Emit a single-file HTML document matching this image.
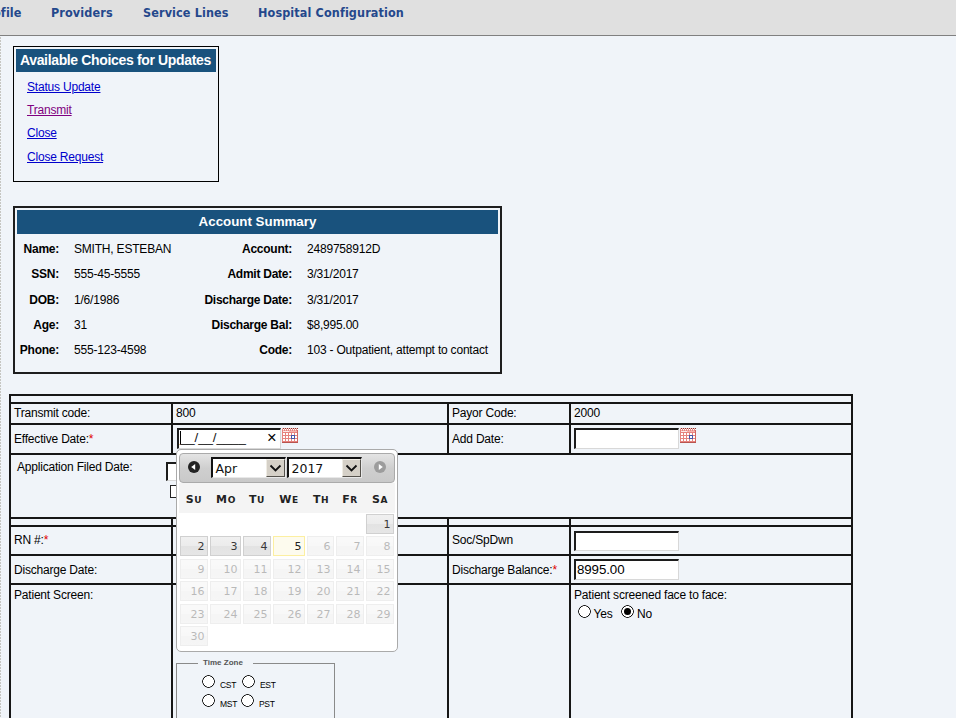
<!DOCTYPE html>
<html lang="en">
<head>
<meta charset="utf-8">
<title>Account Update</title>
<style>
html,body{margin:0;padding:0;}
body{width:956px;height:718px;overflow:hidden;position:relative;background:#f0f4f9;font-family:"Liberation Sans",Arial,sans-serif;font-size:12px;color:#000;letter-spacing:-0.2px;}
.abs{position:absolute;}
#leftdots{left:0;top:37px;width:1px;height:700px;background:repeating-linear-gradient(to bottom,#c6c6c2 0,#c6c6c2 2px,transparent 2px,transparent 3px);}
#nav{left:0;top:0;width:956px;height:35px;background:#e0e0e0;border-bottom:1px solid #808080;}
#nav a{position:absolute;top:5px;font-family:"DejaVu Sans Condensed","DejaVu Sans",Verdana,sans-serif;font-weight:bold;font-size:12.5px;line-height:16px;color:#24488c;text-decoration:none;white-space:nowrap;letter-spacing:0.12px;}
#choices{left:13px;top:46px;width:204px;height:134px;border:1px solid #000;}
#choices h3{position:absolute;left:2px;top:2px;width:196px;height:23px;margin:0;padding-left:4px;background:#19527d;color:#fff;font-size:14px;line-height:22px;font-weight:bold;text-align:left;white-space:nowrap;letter-spacing:-0.35px;}
#choices a{position:absolute;left:13px;font-size:12px;line-height:14px;color:#0000cc;text-decoration:underline;white-space:nowrap;}
#choices a.v{color:#800080;}
#summary{left:13px;top:206px;width:485px;height:164px;border:2px solid #1e1e1e;}
#summary h3{position:absolute;left:2px;top:2px;width:481px;height:24px;margin:0;background:#19527d;color:#fff;font-size:13.33px;line-height:24px;font-weight:bold;text-align:center;letter-spacing:0;}
#summary .l{position:absolute;font-weight:bold;letter-spacing:-0.25px;text-align:right;white-space:nowrap;line-height:14px;}
#summary .v{position:absolute;white-space:nowrap;line-height:14px;}
#form{left:9px;top:394px;border-collapse:collapse;table-layout:fixed;width:842px;}
#form td{border:2px solid #161616;padding:0 0 0 3px;vertical-align:top;font-size:12px;line-height:14px;white-space:nowrap;overflow:visible;}
.req{color:#e00000;}
.inp{display:inline-block;box-sizing:border-box;background:#fff;border-style:solid;border-width:2px 1px 1px 2px;border-color:#1c1c1c #d8d8d8 #d8d8d8 #1c1c1c;height:21px;font-size:13.33px;line-height:17px;padding:0 0 0 1px;letter-spacing:-0.1px;vertical-align:top;}

.caret{position:absolute;left:1px;top:1px;width:1px;height:13px;background:#000;}
.mask{position:relative;top:-1px;font-size:13.33px;letter-spacing:-0.1px;color:#111;}
.clr{position:absolute;right:3.5px;top:-1px;font-size:16.5px;line-height:17px;color:#000;}
.cal{vertical-align:top;margin-left:1px;}
.chk{width:11px;height:11px;border:1px solid #222;background:#fff;}
.rad{width:13px;height:13px;border-radius:50%;background:radial-gradient(circle closest-side,#fff 0,#fff 5.1px,#111 5.6px,#111 6.2px,rgba(17,17,17,0) 6.5px);}
.rad.on::after{content:"";position:absolute;left:3px;top:3px;width:7px;height:7px;border-radius:50%;background:#000;}
#tz{position:absolute;left:3px;top:74px;width:159px;height:70px;margin:0;padding:0;border:1px solid #8a8a8a;box-sizing:border-box;}
#tz legend{margin-left:21px;padding:0 10px 0 5px;font-size:8px;font-weight:bold;color:#555;line-height:9px;letter-spacing:0;position:relative;top:-1.5px;}
#tz label{font-size:8.5px;line-height:9px;color:#000;letter-spacing:-0.3px;margin-top:-1px;}

#dp{left:176px;top:449px;width:220px;height:201px;border:1px solid #aaa;border-radius:5px;background:#fff;font-family:"DejaVu Sans",Verdana,sans-serif;letter-spacing:0;}
#dph{position:absolute;left:2px;top:3px;width:214px;height:28px;border:1px solid #aaa;border-radius:4px;background:linear-gradient(#e4e4e4 0%,#cfcfcf 50%,#c9c9c9 100%);}
#dpw{position:absolute;left:2px;top:33px;width:216px;height:30px;background:#f4f4f4;}
.wd{position:absolute;top:10px;width:30px;text-align:center;font-weight:bold;font-size:11px;line-height:13px;color:#222;letter-spacing:0.6px;}
.wd .sc{font-size:9px;text-transform:uppercase;}
.ico{position:absolute;width:12px;height:12px;border-radius:50%;}
.ico svg{display:block;}
.sel{position:absolute;width:71.5px;height:18px;border-style:solid;border-width:2px 1px 1px 2px;border-color:#111 #e8e8e8 #e8e8e8 #111;background:#fff;}
.sel .st{position:absolute;left:2.5px;top:2px;font-size:12.5px;line-height:16px;color:#111;}
.sel .sb{position:absolute;right:0;top:0;width:17px;height:16px;border:1px solid;border-color:#efece4 #55524c #55524c #efece4;background:#d5d0c7;}
.sel .sb svg{display:block;}
.dc{position:absolute;height:20px;border:1px solid #d0d0d0;background:linear-gradient(#f0f0f0 0%,#ececec 48%,#e3e3e3 52%,#e6e6e6 100%);color:#383838;font-size:11px;line-height:20.5px;text-align:right;padding-right:2.5px;box-sizing:border-box;text-decoration:none;}
.dc.today{border-color:#fcefa1;background:#fdfbee;color:#222;}
.dc.dis{opacity:.35;}
</style>
</head>
<body>
<svg width="0" height="0" style="position:absolute">
  <defs>
    <g id="calico">
      <rect x="0" y="0.5" width="16" height="14.5" fill="#e6837e"/>
      <rect x="0" y="0" width="16" height="1" fill="#f3c1bd"/>
      <rect x="1" y="0" width="1" height="1" fill="#8b3532"/><rect x="1" y="1" width="1" height="1.4" fill="#fff"/><rect x="3" y="0" width="1" height="1" fill="#8b3532"/><rect x="3" y="1" width="1" height="1.4" fill="#fff"/><rect x="5" y="0" width="1" height="1" fill="#8b3532"/><rect x="5" y="1" width="1" height="1.4" fill="#fff"/><rect x="7" y="0" width="1" height="1" fill="#8b3532"/><rect x="7" y="1" width="1" height="1.4" fill="#fff"/><rect x="9" y="0" width="1" height="1" fill="#8b3532"/><rect x="9" y="1" width="1" height="1.4" fill="#fff"/><rect x="11" y="0" width="1" height="1" fill="#8b3532"/><rect x="11" y="1" width="1" height="1.4" fill="#fff"/><rect x="13" y="0" width="1" height="1" fill="#8b3532"/><rect x="13" y="1" width="1" height="1.4" fill="#fff"/><rect x="15" y="0" width="1" height="1" fill="#8b3532"/><rect x="15" y="1" width="1" height="1.4" fill="#fff"/>
      <rect x="1" y="3" width="14" height="1" fill="#f6b3ae"/>
      <rect x="1" y="3" width="6" height="1" fill="#fdeae8"/>
      <rect x="15" y="2" width="1" height="13" fill="#d2665f"/>
      <rect x="0" y="14" width="16" height="1" fill="#b9544f"/>
      <g fill="#fff"><rect x="1" y="5" width="2" height="2"/><rect x="4" y="5" width="2" height="2"/><rect x="7" y="5" width="2" height="2"/><rect x="10" y="5" width="2" height="2"/><rect x="13" y="5" width="2" height="2"/><rect x="1" y="8" width="2" height="2"/><rect x="4" y="8" width="2" height="2"/><rect x="7" y="8" width="2" height="2"/><rect x="10" y="8" width="2" height="2"/><rect x="13" y="8" width="2" height="2"/><rect x="1" y="11" width="2" height="2"/><rect x="4" y="11" width="2" height="2"/><rect x="7" y="11" width="2" height="2"/><rect x="10" y="11" width="2" height="2"/><rect x="13" y="11" width="2" height="2"/></g>
      <rect x="9.5" y="7.5" width="3" height="3" fill="#fff" stroke="#4657a9" stroke-width="1"/>
    </g>
  </defs>
</svg>
<div id="leftdots" class="abs"></div>
<div id="nav" class="abs">
  <a href="#" style="left:-21px">Profile</a>
  <a href="#" style="left:51px">Providers</a>
  <a href="#" style="left:143px">Service Lines</a>
  <a href="#" style="left:258px">Hospital Configuration</a>
</div>

<div id="choices" class="abs">
  <h3>Available Choices for Updates</h3>
  <a href="#" style="top:33px">Status Update</a>
  <a href="#" class="v" style="top:56px">Transmit</a>
  <a href="#" style="top:79px">Close</a>
  <a href="#" style="top:103px">Close Request</a>
</div>

<div id="summary" class="abs">
  <h3>Account Summary</h3>
  <span class="l" style="right:441px;top:34px">Name:</span><span class="v" style="left:59px;top:34px">SMITH, ESTEBAN</span>
  <span class="l" style="right:441px;top:59px">SSN:</span><span class="v" style="left:59px;top:59px">555-45-5555</span>
  <span class="l" style="right:441px;top:85px">DOB:</span><span class="v" style="left:59px;top:85px">1/6/1986</span>
  <span class="l" style="right:441px;top:110px">Age:</span><span class="v" style="left:59px;top:110px">31</span>
  <span class="l" style="right:441px;top:135px">Phone:</span><span class="v" style="left:59px;top:135px">555-123-4598</span>
  <span class="l" style="right:208px;top:34px">Account:</span><span class="v" style="left:292px;top:34px">2489758912D</span>
  <span class="l" style="right:208px;top:59px">Admit Date:</span><span class="v" style="left:292px;top:59px">3/31/2017</span>
  <span class="l" style="right:208px;top:85px">Discharge Date:</span><span class="v" style="left:292px;top:85px">3/31/2017</span>
  <span class="l" style="right:208px;top:110px">Discharge Bal:</span><span class="v" style="left:292px;top:110px">$8,995.00</span>
  <span class="l" style="right:208px;top:135px">Code:</span><span class="v" style="left:292px;top:135px">103 - Outpatient, attempt to contact</span>
</div>

<table id="form" class="abs">
  <colgroup><col style="width:162px"><col style="width:276px"><col style="width:122px"><col style="width:282px"></colgroup>
  <tr style="height:8px"><td colspan="4"></td></tr>
  <tr style="height:21px"><td style="padding-top:2px">Transmit code:</td><td style="padding-top:2px">800</td><td style="padding-top:2px">Payor Code:</td><td style="padding-top:2px">2000</td></tr>
  <tr style="height:30px"><td style="padding-top:7px">Effective Date:<span class="req">*</span></td>
    <td style="padding:3px 0 0 4px"><span class="inp" style="width:104px;position:relative"><i class="caret"></i><span class="mask">__/__/____</span><span class="clr">&#215;</span></span><svg class="cal" width="16" height="15" viewBox="0 0 16 15"><use href="#calico"/></svg></td>
    <td style="padding-top:7px">Add Date:</td>
    <td style="padding:3px 0 0 3px"><span class="inp" style="width:105px"></span><svg class="cal" width="16" height="15" viewBox="0 0 16 15"><use href="#calico"/></svg></td></tr>
  <tr style="height:64px"><td colspan="4" style="padding:5px 0 0 6px;position:relative">Application Filed Date:
    <span class="inp abs" style="left:155px;top:7px;width:105px;height:19px"></span>
    <span class="chk abs" style="left:159px;top:30px"></span></td></tr>
  <tr style="height:8px"><td></td><td></td><td></td><td></td></tr>
  <tr style="height:29px"><td style="padding-top:6px">RN #:<span class="req">*</span></td><td></td><td style="padding-top:6px">Soc/SpDwn</td><td style="padding:3px 0 0 3px"><span class="inp" style="width:105px;height:20px;margin-top:0.5px"></span></td></tr>
  <tr style="height:29px"><td style="padding-top:7px">Discharge Date:</td><td></td><td style="padding-top:7px">Discharge Balance:<span class="req">*</span></td><td style="padding:3px 0 0 3px"><span class="inp" style="width:105px">8995.00</span></td></tr>
  <tr style="height:140px"><td style="padding-top:3px">Patient Screen:</td>
    <td style="position:relative">
      <fieldset id="tz"><legend>Time Zone</legend>
        <span class="rad abs" style="left:25px;top:7px"></span><label class="abs" style="left:43px;top:14px">CST</label>
        <span class="rad abs" style="left:65px;top:7px"></span><label class="abs" style="left:83px;top:14px">EST</label>
        <span class="rad abs" style="left:25px;top:26px"></span><label class="abs" style="left:43px;top:33px">MST</label>
        <span class="rad abs" style="left:64px;top:26px"></span><label class="abs" style="left:82px;top:33px">PST</label>
      </fieldset>
    </td>
    <td></td>
    <td style="padding-top:3px;position:relative">Patient screened face to face:
      <span class="rad abs" style="left:7px;top:20px"></span><span class="abs" style="left:22.5px;top:22px">Yes</span>
      <span class="rad on abs" style="left:50px;top:20px"></span><span class="abs" style="left:66px;top:22px">No</span>
    </td></tr>
</table>


<div id="dp" class="abs">
  <div id="dph">
    <span class="ico" style="left:8px;top:7px;background:#222"><svg width="12" height="12" viewBox="0 0 12 12"><path d="M3.2 6 L7.2 3 L7.2 9 Z" fill="#fff"/></svg></span>
    <span class="sel" style="left:31px;top:3px"><span class="st">Apr</span><span class="sb"><svg width="17" height="16" viewBox="0 0 17 16"><path d="M3.5 5.5 L8.5 10.5 L13.5 5.5" fill="none" stroke="#111" stroke-width="1.8"/></svg></span></span>
    <span class="sel" style="left:107px;top:3px"><span class="st">2017</span><span class="sb"><svg width="17" height="16" viewBox="0 0 17 16"><path d="M3.5 5.5 L8.5 10.5 L13.5 5.5" fill="none" stroke="#111" stroke-width="1.8"/></svg></span></span>
    <span class="ico" style="left:194px;top:7px;background:#9c9c9c"><svg width="12" height="12" viewBox="0 0 12 12"><path d="M8.8 6 L4.8 3 L4.8 9 Z" fill="#fff"/></svg></span>
  </div>
  <div id="dpw"><span class="wd" style="left:0px">S<span class="sc">u</span></span><span class="wd" style="left:32px">M<span class="sc">o</span></span><span class="wd" style="left:63px">T<span class="sc">u</span></span><span class="wd" style="left:95px">W<span class="sc">e</span></span><span class="wd" style="left:127px">T<span class="sc">h</span></span><span class="wd" style="left:156px">F<span class="sc">r</span></span><span class="wd" style="left:186px">S<span class="sc">a</span></span></div>
  <a class="dc" style="left:189px;top:64px;width:28px">1</a><a class="dc" style="left:3px;top:86.39999999999998px;width:28px">2</a><a class="dc" style="left:33px;top:86.39999999999998px;width:31px">3</a><a class="dc" style="left:66px;top:86.39999999999998px;width:28px">4</a><a class="dc today" style="left:96px;top:86.39999999999998px;width:32px">5</a><a class="dc dis" style="left:130px;top:86.39999999999998px;width:27px">6</a><a class="dc dis" style="left:159px;top:86.39999999999998px;width:28px">7</a><a class="dc dis" style="left:189px;top:86.39999999999998px;width:28px">8</a><a class="dc dis" style="left:3px;top:108.79999999999995px;width:28px">9</a><a class="dc dis" style="left:33px;top:108.79999999999995px;width:31px">10</a><a class="dc dis" style="left:66px;top:108.79999999999995px;width:28px">11</a><a class="dc dis" style="left:96px;top:108.79999999999995px;width:32px">12</a><a class="dc dis" style="left:130px;top:108.79999999999995px;width:27px">13</a><a class="dc dis" style="left:159px;top:108.79999999999995px;width:28px">14</a><a class="dc dis" style="left:189px;top:108.79999999999995px;width:28px">15</a><a class="dc dis" style="left:3px;top:131.20000000000005px;width:28px">16</a><a class="dc dis" style="left:33px;top:131.20000000000005px;width:31px">17</a><a class="dc dis" style="left:66px;top:131.20000000000005px;width:28px">18</a><a class="dc dis" style="left:96px;top:131.20000000000005px;width:32px">19</a><a class="dc dis" style="left:130px;top:131.20000000000005px;width:27px">20</a><a class="dc dis" style="left:159px;top:131.20000000000005px;width:28px">21</a><a class="dc dis" style="left:189px;top:131.20000000000005px;width:28px">22</a><a class="dc dis" style="left:3px;top:153.60000000000002px;width:28px">23</a><a class="dc dis" style="left:33px;top:153.60000000000002px;width:31px">24</a><a class="dc dis" style="left:66px;top:153.60000000000002px;width:28px">25</a><a class="dc dis" style="left:96px;top:153.60000000000002px;width:32px">26</a><a class="dc dis" style="left:130px;top:153.60000000000002px;width:27px">27</a><a class="dc dis" style="left:159px;top:153.60000000000002px;width:28px">28</a><a class="dc dis" style="left:189px;top:153.60000000000002px;width:28px">29</a><a class="dc dis" style="left:3px;top:176.0px;width:28px">30</a>
</div>
</body>
</html>
